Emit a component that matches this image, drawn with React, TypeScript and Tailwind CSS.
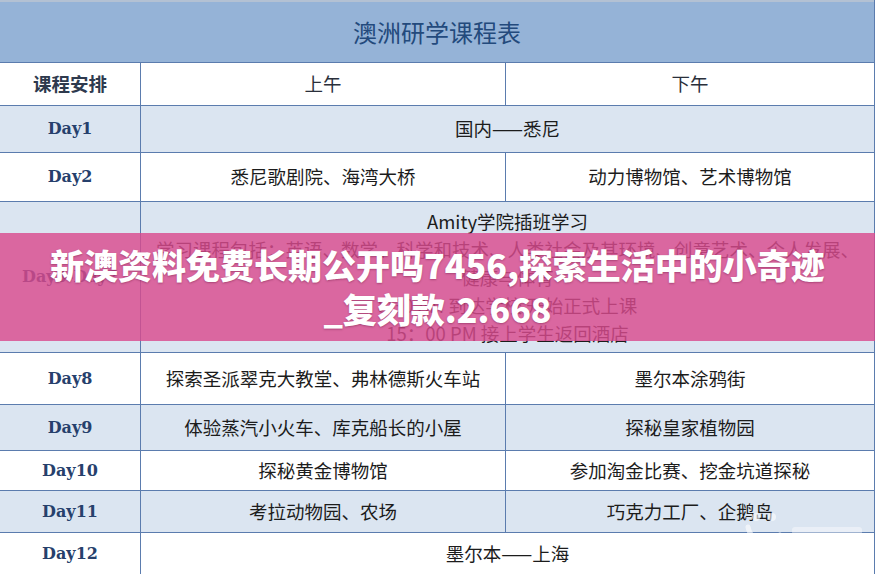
import React from 'react';

type Row = {
  day: string;
  am?: string;
  pm?: string;
  full?: string;
  h: string;
  blue: boolean;
};

const rows: Row[] = [
  { day: 'Day1', full: '国内——悉尼', h: 'h-[47px]', blue: true },
  { day: 'Day2', am: '悉尼歌剧院、海湾大桥', pm: '动力博物馆、艺术博物馆', h: 'h-[49px]', blue: false },
];

const rowsAfter: Row[] = [
  { day: 'Day8', am: '探索圣派翠克大教堂、弗林德斯火车站', pm: '墨尔本涂鸦街', h: 'h-[52px]', blue: false },
  { day: 'Day9', am: '体验蒸汽小火车、库克船长的小屋', pm: '探秘皇家植物园', h: 'h-[46px]', blue: true },
  { day: 'Day10', am: '探秘黄金博物馆', pm: '参加淘金比赛、挖金坑道探秘', h: 'h-[40px]', blue: false },
  { day: 'Day11', am: '考拉动物园、农场', pm: '巧克力工厂、企鹅岛', h: 'h-[42px]', blue: true },
  { day: 'Day12', full: '墨尔本——上海', h: 'h-[42px]', blue: false },
];

const cjk = "font-['Noto_Sans_CJK_SC',sans-serif]";

function DayRow({ row }: { row: Row }) {
  return (
    <div
      className={`flex ${row.h} border-b border-[#5b7cae] ${row.blue ? 'bg-[#dbe5f1]' : 'bg-white'}`}
    >
      <div className="w-[141px] shrink-0 flex items-center justify-center border-r border-[#5b7cae] font-['DejaVu_Serif',serif] font-bold text-[16px] text-[#26406c]">
        {row.day}
      </div>
      {row.full ? (
        <div className={`flex-1 flex items-center justify-center text-[18.5px] text-[#1c1c1c] ${cjk}`}>
          {row.full}
        </div>
      ) : (
        <>
          <div className={`w-[365px] shrink-0 flex items-center justify-center border-r border-[#5b7cae] text-[18.5px] text-[#1c1c1c] ${cjk}`}>
            {row.am}
          </div>
          <div className={`flex-1 flex items-center justify-center text-[18.5px] text-[#1c1c1c] ${cjk}`}>
            {row.pm}
          </div>
        </>
      )}
    </div>
  );
}

export default function App() {
  return (
    <div className="relative w-[875px] h-[574px] overflow-hidden bg-white">
      <div className="border-r border-[#5b7cae] h-full">
        {/* title */}
        <div className="h-[2px] bg-[#b3c1d3]" />
        <div className={`h-[61px] bg-[#95b3d7] border-b border-[#5b7cae] flex items-center justify-center text-[24px] text-[#234a7c] ${cjk}`}>
          澳洲研学课程表
        </div>

        {/* header */}
        <div className={`flex h-[43px] border-b border-[#5b7cae] bg-white text-[18.5px] ${cjk}`}>
          <div className="w-[141px] shrink-0 flex items-center justify-center border-r border-[#5b7cae] font-bold text-[#2e3a4e]">
            课程安排
          </div>
          <div className="w-[365px] shrink-0 flex items-center justify-center border-r border-[#5b7cae] text-[#2a2f3a]">
            上午
          </div>
          <div className="flex-1 flex items-center justify-center text-[#2a2f3a]">下午</div>
        </div>

        {rows.map((r) => (
          <DayRow key={r.day} row={r} />
        ))}

        {/* Day3 - Day7 */}
        <div className="flex h-[151px] border-b border-[#5b7cae] bg-[#dbe5f1]">
          <div className="w-[141px] shrink-0 flex items-center justify-center border-r border-[#5b7cae] font-['DejaVu_Serif',serif] font-bold text-[16px] text-[#26406c]">
            Day3-Day7
          </div>
          <div className={`flex-1 flex flex-col items-center pt-[5px] leading-[28px] text-[18.5px] text-[#1c1c1c] ${cjk}`}>
            <div>Amity学院插班学习</div>
            <div className="whitespace-nowrap">学习课程包括：英语、数学、科学和技术、人类社会及其环境、创意艺术、个人发展、</div>
            <div>健康与体育</div>
            <div>8:30 AM 到达学校 开始正式上课</div>
            <div>15：00 PM 接上学生返回酒店</div>
          </div>
        </div>

        {rowsAfter.map((r) => (
          <DayRow key={r.day} row={r} />
        ))}
      </div>

      {/* overlay banner */}
      <div className="absolute left-0 right-0 top-[233px] h-[108px] bg-[#d94a8e]/[0.82] flex flex-col items-center justify-center">
        <div className={`text-white font-black text-[34px] leading-[44px] whitespace-nowrap [text-shadow:0_1px_2px_rgba(80,0,40,0.35)] ${cjk}`}>
          新澳资料免费长期公开吗7456,探索生活中的小奇迹
        </div>
        <div className={`text-white font-black text-[34px] leading-[44px] whitespace-nowrap [text-shadow:0_1px_2px_rgba(80,0,40,0.35)] ${cjk}`}>
          _复刻款.2.668
        </div>
      </div>

      {/* faint watermark */}
      <svg className="absolute left-[740px] top-[505px] opacity-60" width="130" height="55" viewBox="0 0 130 55">
        <path d="M8 22 A18 18 0 0 0 40 30" fill="none" stroke="white" strokeWidth="5" strokeLinecap="round" />
        <circle cx="16" cy="12" r="4" fill="white" />
        <circle cx="32" cy="12" r="4" fill="white" />
        <rect x="52" y="22" width="70" height="8" rx="3" fill="white" opacity="0.7" />
        <rect x="52" y="36" width="60" height="6" rx="3" fill="white" opacity="0.5" />
      </svg>
    </div>
  );
}
